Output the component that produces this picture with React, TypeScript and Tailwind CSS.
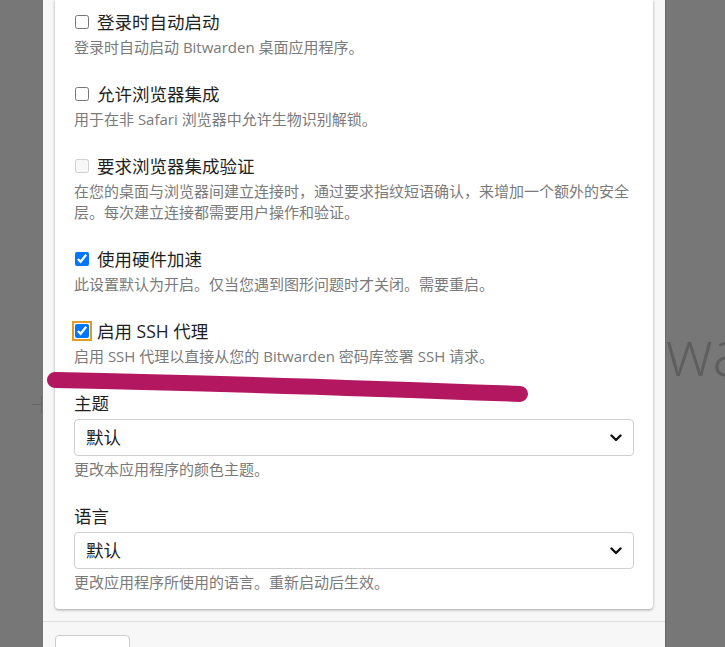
import React from "react";

type CheckItem = {
  label: string;
  desc: string[];
  checked?: boolean;
  disabled?: boolean;
  focused?: boolean;
};

const items: CheckItem[] = [
  { label: "登录时自动启动", desc: ["登录时自动启动 Bitwarden 桌面应用程序。"] },
  { label: "允许浏览器集成", desc: ["用于在非 Safari 浏览器中允许生物识别解锁。"] },
  {
    label: "要求浏览器集成验证",
    desc: [
      "在您的桌面与浏览器间建立连接时，通过要求指纹短语确认，来增加一个额外的安全",
      "层。每次建立连接都需要用户操作和验证。",
    ],
    disabled: true,
  },
  { label: "使用硬件加速", desc: ["此设置默认为开启。仅当您遇到图形问题时才关闭。需要重启。"], checked: true },
  {
    label: "启用 SSH 代理",
    desc: ["启用 SSH 代理以直接从您的 Bitwarden 密码库签署 SSH 请求。"],
    checked: true,
    focused: true,
  },
];

function Chevron() {
  return (
    <svg width="12" height="8" viewBox="0 0 12 8" className="pointer-events-none absolute right-[6px] top-1/2 -translate-y-1/2">
      <polyline points="1.5,1.5 6,6 10.5,1.5" fill="none" stroke="#111" strokeWidth="2.4" strokeLinecap="round" strokeLinejoin="round" />
    </svg>
  );
}

function SelectField({ label, desc }: { label: string; desc: string }) {
  return (
    <div>
      <div className="text-[17.5px] leading-[24px] text-[#1f1f1f]">{label}</div>
      <div className="relative mt-[4px] mr-[19px]">
        <select
          defaultValue="default"
          className="h-[37px] w-full appearance-none rounded-[4px] border border-[#cfcfcf] bg-white pl-[11px] text-[17.5px] text-[#222]"
        >
          <option value="default">默认</option>
        </select>
        <div className="pointer-events-none absolute right-[6px] top-0 h-full w-[14px]">
          <Chevron />
        </div>
      </div>
      <div className="mt-[3px] text-[15px] leading-[21px] text-[#7a7a7a]">{desc}</div>
    </div>
  );
}

export default function App() {
  return (
    <div
      className="relative h-[647px] w-[725px] overflow-hidden bg-[#777777]"
      style={{ fontFamily: '"Open Sans", "Noto Sans CJK SC", sans-serif' }}
    >
      {/* app behind the dialog */}
      <div className="absolute left-[666px] top-[320px] text-[64px] font-thin leading-none text-[#5e5e5e]">wa</div>
      <div className="absolute left-[32px] top-[396px] h-[17px] w-[10px]">
        <div className="absolute left-0 top-[8px] h-[1px] w-[10px] bg-[#666]" />
        <div className="absolute left-[9px] top-0 h-[17px] w-[1px] bg-[#666]" />
      </div>

      <div className="relative ml-[43px] flex h-full w-[623px] flex-col border-r border-[#666] bg-[#f7f7f7]">
        <div className="px-[12px] pb-[12px]">
          <div className="rounded-b-[4px] bg-white pb-[16px] pl-[19px] pt-[10px] shadow-[0_1px_3px_rgba(0,0,0,0.35)]">
            <div className="flex flex-col gap-[24px]">
              {items.map((it) => (
                <div key={it.label}>
                  <label className="flex h-[24px] items-center gap-[8px]">
                    <input
                      type="checkbox"
                      defaultChecked={it.checked}
                      disabled={it.disabled}
                      className={
                        "ml-[1px] h-[14px] w-[14px] " +
                        (it.focused ? "rounded-[3px] outline-2 outline-offset-[1px] outline-[#e49b26]" : "")
                      }
                    />
                    <span className="text-[17.5px] leading-[24px] text-[#1f1f1f]">{it.label}</span>
                  </label>
                  <div className="mt-[3px] text-[15px] leading-[21px] text-[#7a7a7a]">
                    {it.desc.map((d) => (
                      <div key={d}>{d}</div>
                    ))}
                  </div>
                </div>
              ))}
              <SelectField label="主题" desc="更改本应用程序的颜色主题。" />
              <SelectField label="语言" desc="更改应用程序所使用的语言。重新启动后生效。" />
            </div>
          </div>
        </div>
        <div className="border-t border-[#dedede] px-[12px] pt-[13px]">
          <button className="flex h-[44px] w-[75px] items-end justify-center rounded-[4px] border border-[#cccccc] bg-white pb-[4px] text-[17.5px] text-[#1f1f1f]">
            关闭
          </button>
        </div>
      </div>

      {/* hand-drawn highlight */}
      <svg className="pointer-events-none absolute left-0 top-0" width="725" height="647">
        <path d="M55 380 Q 260 384 520 394" fill="none" stroke="#b3175f" strokeWidth="16" strokeLinecap="round" />
      </svg>
    </div>
  );
}
